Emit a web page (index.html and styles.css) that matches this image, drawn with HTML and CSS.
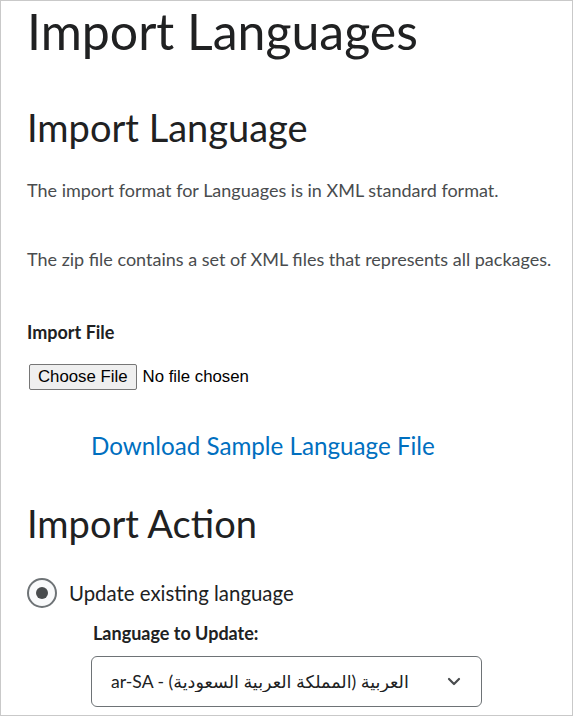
FILE: index.html
```html
<!DOCTYPE html>
<html lang="en">
<head>
    <meta charset="UTF-8">
    <meta name="viewport" content="width=device-width, initial-scale=1.0">
    <title>Import Languages</title>
    <link rel="stylesheet" href="styles.css">
</head>
<body>
    <div class="page">
        <h1 class="page-title">Import Languages</h1>

        <h2 class="section-title">Import Language</h2>
        <p class="note note-first">The import format for Languages is in XML standard format.</p>
        <p class="note">The zip file contains a set of XML files that represents all packages.</p>

        <form id="importForm">
            <label class="field-label" for="importFile">Import File</label>
            <input class="file-input" type="file" id="importFile" name="importFile" accept=".zip,.xml">

            <a class="sample-link" href="#">Download Sample Language File</a>

            <h2 class="section-title action-title">Import Action</h2>

            <label class="radio-row">
                <input class="radio" type="radio" name="action" value="update" checked>
                <span>Update existing language</span>
            </label>

            <div class="sub-field">
                <label class="field-label" for="languageSelect">Language to Update:</label>
                <div class="select-wrap">
                    <select class="select" id="languageSelect" name="language">
                        <option value="ar-SA">ar-SA - &#x2067;العربية (المملكة العربية السعودية)&#x2069;</option>
                    </select>
                    <svg class="chevron" width="14" height="9" viewBox="0 0 14 9" aria-hidden="true">
                        <path d="M2 2l5 5 5-5" fill="none" stroke="#494c4e" stroke-width="2.2" stroke-linecap="round" stroke-linejoin="round"/>
                    </svg>
                </div>
            </div>
        </form>
    </div>
</body>
</html>
```

FILE: styles.css
```css
html, body {
    margin: 0;
    padding: 0;
    background: #ffffff;
}
body {
    font-family: Lato, "DejaVu Sans", sans-serif;
    color: #202122;
}
.page {
    box-sizing: border-box;
    height: 716px;
    overflow: hidden;
    border: 1px solid #c9c9c9;
    padding-left: 26px;
}
.page-title {
    margin: 0;
    font-size: 50px;
    font-weight: 400;
    line-height: 60px;
}
.section-title {
    margin: 42px 0 0;
    font-size: 38px;
    font-weight: 400;
    line-height: 48px;
}
.note {
    margin: 45px 0 0;
    font-size: 18px;
    line-height: 24px;
    color: #494c4e;
}
.note-first {
    margin-top: 27px;
}
form {
    display: flex;
    flex-direction: column;
    align-items: flex-start;
}
.field-label {
    display: block;
    margin-top: 49px;
    font-size: 18px;
    font-weight: 700;
    line-height: 24px;
}
.file-input {
    margin: 20px 0 0 2px;
    font-family: "Liberation Sans", Arial, sans-serif;
    font-size: 16.8px;
    color: #000000;
}
.file-input::file-selector-button {
    font-family: "Liberation Sans", Arial, sans-serif;
    font-size: 16.8px;
    height: 26px;
    padding: 0 8px;
    margin-right: 6px;
    background: #efefef;
    color: #000000;
    border: 1px solid #767676;
    border-radius: 2px;
}
.sample-link {
    margin: 39px 0 0 64px;
    font-size: 24.2px;
    line-height: 34px;
    color: #006fbf;
    text-decoration: none;
}
.action-title {
    margin-top: 36px;
}
.radio-row {
    display: flex;
    align-items: center;
    gap: 12px;
    margin-top: 31px;
    font-size: 20.4px;
    line-height: 30px;
}
.radio {
    appearance: none;
    box-sizing: border-box;
    width: 30px;
    height: 30px;
    margin: 0;
    border: 2px solid #6e7376;
    border-radius: 50%;
    background: #f9fafb;
    display: grid;
    place-content: center;
}
.radio:checked::before {
    content: "";
    width: 12px;
    height: 12px;
    border-radius: 50%;
    background: #494c4e;
}
.sub-field {
    margin-left: 64px;
}
.sub-field .field-label {
    margin-top: 13px;
    margin-left: 2px;
}
.select-wrap {
    position: relative;
    margin-top: 11px;
    width: 391px;
}
.select {
    appearance: none;
    box-sizing: border-box;
    width: 100%;
    height: 51px;
    padding: 0 50px 0 19px;
    font-family: Lato, "DejaVu Sans", sans-serif;
    font-size: 17.6px;
    color: #202122;
    background: #ffffff;
    border: 1px solid #6e7376;
    border-radius: 6px;
}
.chevron {
    position: absolute;
    right: 21px;
    top: 21px;
    pointer-events: none;
}
```
